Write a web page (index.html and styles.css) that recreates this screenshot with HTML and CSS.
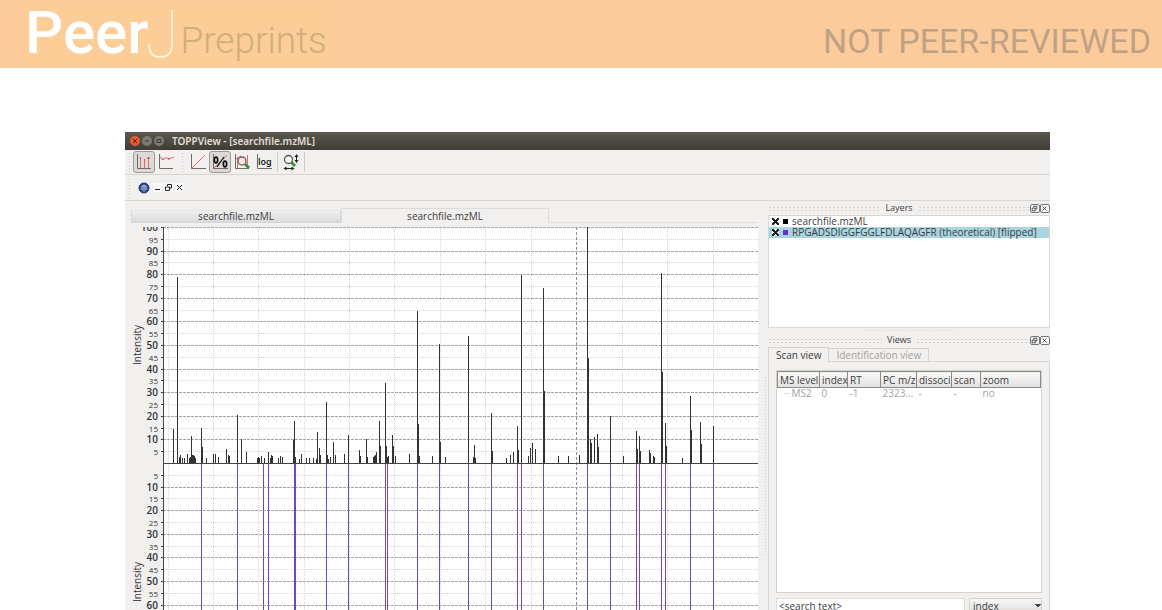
FILE: index.html
```html
<!DOCTYPE html>
<html lang="en">
<head>
    <meta charset="UTF-8">
    <meta name="viewport" content="width=device-width, initial-scale=1.0">
    <title>TOPPView - PeerJ Preprints</title>
    <link rel="stylesheet" href="styles.css">
</head>
<body>
    <header class="banner">
        <div class="logo">
            <span class="logo-peer">Peer</span>
            <svg class="logo-j" width="26" height="50" viewBox="0 0 26 50"><path d="M24 1V35Q24 48 12 48Q1 48 1 35" fill="none" stroke="#fff0da" stroke-width="2"/></svg>
            <span class="logo-preprints">Preprints</span>
        </div>
        <span class="review-state">NOT PEER-REVIEWED</span>
    </header>

    <main class="window">
        <div class="titlebar">
            <button class="wm wm-close" aria-label="Close"><svg viewBox="0 0 10 10"><path d="M3 3L7 7M7 3L3 7"/></svg></button>
            <button class="wm" aria-label="Minimize"><svg viewBox="0 0 10 10"><path d="M3 5H7"/></svg></button>
            <button class="wm" aria-label="Maximize"><svg viewBox="0 0 10 10"><path d="M3 3.5H7V6.5H3Z"/></svg></button>
            <span class="title">TOPPView - [searchfile.mzML]</span>
        </div>

        <div class="toolbar">
            <span class="handle"></span>
            <button class="tool pressed" aria-label="Peak mode">
                <svg viewBox="0 0 18 18"><path class="ax" d="M2.5 1V15.5H16"/><path class="red" d="M5.5 15V5M9.5 15V7M13.5 15V5"/><path class="red-fill" d="M5 4h1v2h-1zM9 6h1v2h-1zM12.5 4h2v2h-2z"/></svg>
            </button>
            <button class="tool" aria-label="Raw data mode">
                <svg viewBox="0 0 18 18"><path class="ax" d="M2.5 1V15.5H16"/><path class="red" d="M2.5 3L5.5 6.5L9 4.500L12 6L17 4"/><path class="red-fill" d="M5 5.500h1.500v1.500h-1.500zM11 5h1.500v1.500h-1.500z"/></svg>
            </button>
            <span class="handle inner"></span>
            <button class="tool" aria-label="Linear intensity">
                <svg viewBox="0 0 18 18"><path class="ax" d="M2.5 1V15.5H17"/><path class="red" d="M3 15L16 2"/></svg>
            </button>
            <button class="tool pressed" aria-label="Percentage intensity">
                <svg viewBox="0 0 18 18"><path class="ax" d="M2.5 1V15.5H17"/><path class="red" d="M3 15L16 2"/><path d="M6 14L13 4" stroke="#111" stroke-width="1.3"/><ellipse cx="5" cy="7" rx="1.6" ry="2.8" fill="#fff" stroke="#111" stroke-width="1.8"/><ellipse cx="14" cy="11" rx="1.6" ry="2.8" fill="#fff" stroke="#111" stroke-width="1.8"/></svg>
            </button>
            <button class="tool" aria-label="Snap to maximum">
                <svg viewBox="0 0 18 18"><path class="ax" d="M2.5 1V15.5H16"/><path class="red" d="M4.5 15V4M14.5 15V2M3 6L8 3"/><path d="M12 11L16 15" stroke="#2f9a2f" stroke-width="3"/><circle cx="9" cy="8" r="4" fill="#f6e4e4" stroke="#666" stroke-width="1.3"/></svg>
            </button>
            <button class="tool" aria-label="Logarithmic intensity">
                <svg viewBox="0 0 18 18"><path class="ax" d="M2.5 1V15.5H17"/><text x="3" y="12" class="log-text">log</text></svg>
            </button>
            <span class="rule"></span>
            <button class="tool" aria-label="Reset zoom">
                <svg viewBox="0 0 18 18"><path d="M9 9L13 13" stroke="#2f9a2f" stroke-width="3"/><circle cx="6.5" cy="6.5" r="4" fill="#f8f8f8" stroke="#555" stroke-width="1.3"/><path d="M14.5 2V9M3 15.5H11" stroke="#222"/><path d="M12.5 4L14.5 1L16.5 4ZM12.5 7L14.5 10L16.5 7ZM4.5 13.5L1.5 15.5L4.5 17.5ZM9.5 13.5L12.5 15.5L9.5 17.5Z" fill="#222"/></svg>
            </button>
            <span class="rule"></span>
        </div>

        <div class="toolbar">
            <span class="handle"></span>
            <svg class="globe" viewBox="0 0 12 12"><circle cx="6" cy="6" r="5" fill="#34508f" stroke="#1d2f66"/><path d="M4 4.5Q6 2 8 4.5M4 4V8M6 3V9.5M8 4V8" stroke="#b8c9ec" fill="none"/></svg>
            <button class="mdi" aria-label="Minimize file"><svg viewBox="0 0 9 9"><path d="M2 6.5H7"/></svg></button>
            <button class="mdi" aria-label="Restore file"><svg viewBox="0 0 9 9"><path d="M3.5 3V1.5H7.5V5H6M1.5 4H5.5V7.5H1.5Z"/></svg></button>
            <button class="mdi" aria-label="Close file"><svg viewBox="0 0 9 9"><path d="M2 2L7 7M7 2L2 7"/></svg></button>
        </div>

        <div class="workspace">
            <section class="plot-pane">
                <div class="file-tabs">
                    <button class="file-tab">searchfile.mzML</button>
                    <button class="file-tab active">searchfile.mzML</button>
                    <span class="tab-rest"></span>
                </div>
                <svg id="spectrum" class="spectrum" viewBox="0 0 633 383" preserveAspectRatio="xMinYMin slice"></svg>
            </section>

            <div class="splitter"><span class="grip"></span></div>

            <aside class="docks">
                <div class="dock-title">
                    <span class="dots"></span><h2>Layers</h2><span class="dots"></span>
                    <button class="mdi framed" aria-label="Float layers"><svg viewBox="0 0 9 9"><path d="M3.5 3V1.5H7.5V5H6M1.5 4H5.5V7.5H1.5Z"/></svg></button>
                    <button class="mdi framed" aria-label="Close layers"><svg viewBox="0 0 9 9"><path d="M2 2L7 7M7 2L2 7"/></svg></button>
                </div>
                <div class="layer-list">
                    <label class="layer"><input type="checkbox" checked><span class="swatch"></span>searchfile.mzML</label>
                    <label class="layer selected"><input type="checkbox" checked><span class="swatch purple"></span>RPGADSDIGGFGGLFDLAQAGFR (theoretical) [flipped]</label>
                </div>
                <span class="dock-grip"></span>
                <div class="dock-title">
                    <span class="dots"></span><h2>Views</h2><span class="dots"></span>
                    <button class="mdi framed" aria-label="Float views"><svg viewBox="0 0 9 9"><path d="M3.5 3V1.5H7.5V5H6M1.5 4H5.5V7.5H1.5Z"/></svg></button>
                    <button class="mdi framed" aria-label="Close views"><svg viewBox="0 0 9 9"><path d="M2 2L7 7M7 2L2 7"/></svg></button>
                </div>
                <div class="view-tabs">
                    <button class="view-tab active">Scan view</button>
                    <button class="view-tab" disabled>Identification view</button>
                </div>
                <div class="view-panel">
                    <div class="scan-box">
                        <table class="scans">
                            <thead>
                                <tr><th class="c-level">MS level</th><th class="c-index">index</th><th class="c-rt">RT</th><th class="c-pc">PC m/z</th><th class="c-diss">dissoci</th><th class="c-scan">scan</th><th>zoom</th></tr>
                            </thead>
                            <tbody>
                                <tr><td class="branch">MS2</td><td>0</td><td>-1</td><td>2323...</td><td>-</td><td>-</td><td>no</td></tr>
                            </tbody>
                        </table>
                    </div>
                    <div class="search-row">
                        <input type="text" class="search" aria-label="Search text" value="&lt;search text&gt;">
                        <select class="search-by" aria-label="Search column"><option>index</option></select>
                    </div>
                </div>
            </aside>
        </div>
    </main>

    <script src="spectrum.js"></script>
</body>
</html>
```

FILE: styles.css
```css
* {
    box-sizing: border-box;
}
body {
    margin: 0;
    height: 100vh;
    overflow: hidden;
    display: flex;
    flex-direction: column;
    background: #fff;
    color: #3c3c3c;
    font: 10px/12px "Open Sans", "Noto Sans", sans-serif;
}
button, input, select {
    font: inherit;
    color: inherit;
    margin: 0;
    padding: 0;
    border: none;
    background: none;
}
h2 {
    margin: 0;
    font: inherit;
}

/* banner */
.banner {
    flex: none;
    display: flex;
    justify-content: space-between;
    align-items: center;
    height: 68px;
    padding: 0 11px 0 24px;
    background: #fbcb9c;
    font-family: Roboto, sans-serif;
}
.logo {
    display: flex;
    align-items: baseline;
    height: 64px;
    padding: 0 8px 0 1px;
    background: #fccd96;
}
.logo-peer {
    color: #fff;
    font: 500 60px/62px Roboto, sans-serif;
}
.logo-j {
    align-self: center;
    margin-right: 6px;
}
.logo-preprints {
    color: #cfae80;
    font: 300 37px/62px Roboto, sans-serif;
}
.review-state {
    padding-top: 14px;
    color: #bfa284;
    font-size: 34px;
    line-height: 40px;
}

/* application window */
.window {
    flex: 1;
    min-height: 0;
    margin: 64px 112px 0 125px;
    display: flex;
    flex-direction: column;
    background: #f2f0ee;
}
.titlebar {
    flex: none;
    display: flex;
    align-items: center;
    gap: 2px;
    height: 18px;
    padding-left: 5px;
    background: linear-gradient(#5a574e, #3f3c37);
}
.wm {
    display: flex;
    width: 10px;
    height: 10px;
    border-radius: 50%;
    background: #7d7a72;
    stroke: #3c3a35;
    fill: none;
}
.wm-close {
    background: #e8592b;
    stroke: #5a1d08;
}
.title {
    margin-left: 6px;
    color: #e2ded5;
    font-family: "Noto Sans", sans-serif;
    font-weight: 600;
}
.toolbar {
    flex: none;
    display: flex;
    align-items: center;
    height: 25px;
    padding-left: 3px;
    border-bottom: 1px solid #d8d5d2;
}
.toolbar + .toolbar {
    height: 26px;
}
.handle {
    width: 4px;
    height: 20px;
    margin-right: 1px;
    background: radial-gradient(circle, #cfccc9 1px, transparent 1px) 0 0 / 3px 3px;
}
.handle.inner {
    margin: 0 2px 0 4px;
}
.tool {
    display: flex;
    align-items: center;
    justify-content: center;
    width: 22px;
    height: 22px;
    border: 1px solid transparent;
    border-radius: 3px;
}
.tool.pressed {
    border-color: #9c9996;
    background: #dcdad8;
}
.tool svg {
    width: 18px;
    height: 18px;
    fill: none;
}
.tool .ax {
    stroke: #6c6c6c;
    stroke-width: 1;
}
.tool .red {
    stroke: #e56a6a;
}
.tool .red-fill {
    fill: #d94848;
}
.tool .log-text {
    fill: #222;
    font: 600 9px "Noto Sans", sans-serif;
}
.rule {
    width: 1px;
    height: 20px;
    margin: 0 2px;
    background: #cfccc9;
}
.globe {
    width: 12px;
    height: 12px;
    margin: 0 3px 0 5px;
}
.mdi {
    display: flex;
    width: 9px;
    height: 9px;
    margin-right: 2px;
    background: #fbfafa;
    stroke: #222;
    fill: none;
}
.mdi.framed {
    width: 10px;
    height: 9px;
    margin: 0;
    border: 1px solid #777;
    border-radius: 2px;
}

/* work area */
.workspace {
    flex: 1;
    min-height: 0;
    display: grid;
    grid-template-columns: minmax(0, 1fr) 10px 282px;
}
.plot-pane {
    display: flex;
    flex-direction: column;
    min-height: 0;
}
.file-tabs {
    flex: none;
    display: flex;
    align-items: flex-end;
    height: 26px;
    padding: 0 0 4px 6px;
}
.file-tab {
    flex: 0 1 210px;
    height: 13px;
    border: 1px solid #d8d6d4;
    border-top-color: #e8e6e4;
    background: linear-gradient(#f0f0f0, #dadada);
    line-height: 11px;
}
.file-tab.active {
    flex-basis: 208px;
    height: 15px;
    border-color: #dedcda;
    border-bottom: none;
    background: #f2f0ee;
    line-height: 13px;
}
.tab-rest {
    flex: 1;
    border-bottom: 1px solid #e2dfdc;
}
.spectrum {
    flex: 1;
    min-height: 0;
    width: 100%;
}
.splitter {
    display: flex;
    align-items: center;
    justify-content: flex-end;
    padding: 120px 1px 0 0;
}
.grip {
    width: 3px;
    height: 180px;
    background: radial-gradient(circle, #cbc8c5 1px, transparent 1px) 0 0 / 3px 3px;
}

/* docks */
.docks {
    display: flex;
    flex-direction: column;
    min-height: 0;
}
.dock-title {
    flex: none;
    display: flex;
    align-items: center;
    height: 14px;
}
.dock-title h2 {
    padding: 0 5px;
    font-size: 9px;
}
.dots {
    flex: 1;
    height: 5px;
    background: radial-gradient(circle, #d4d1ce 1px, transparent 1px) 0 0 / 4px 3px;
}
.layer-list {
    flex: none;
    height: 113px;
    border: 1px solid #dad7d4;
    background: #fff;
}
.layer {
    display: flex;
    align-items: center;
    height: 11px;
    padding-left: 3px;
    line-height: 11px;
    white-space: nowrap;
}
.layer.selected {
    background: #a9d5e0;
}
.layer input {
    appearance: none;
    width: 7px;
    height: 7px;
    background:
        linear-gradient(45deg, transparent 40%, #222 40%, #222 60%, transparent 60%),
        linear-gradient(-45deg, #e9eef0 40%, #222 40%, #222 60%, #e9eef0 60%);
}
.swatch {
    width: 5px;
    height: 5px;
    margin: 0 4px;
    background: #000;
}
.swatch.purple {
    background: #6a2fd0;
}
.dock-grip {
    flex: none;
    width: 92px;
    height: 3px;
    margin: 1px auto;
    background: radial-gradient(circle, #d4d1ce 1px, transparent 1px) 0 0 / 3px 3px;
}
.view-tabs {
    flex: none;
    display: flex;
    align-items: flex-end;
    height: 15px;
    margin-bottom: -1px;
}
.view-tab {
    height: 14px;
    padding: 0 7px;
    border: 1px solid #d4d1ce;
    border-left: none;
    color: #a5a29f;
    line-height: 12px;
}
.view-tab.active {
    height: 15px;
    border-left: 1px solid #d4d1ce;
    border-bottom: none;
    background: #f2f0ee;
    color: #3c3c3c;
    position: relative;
}
.view-panel {
    flex: 1;
    min-height: 0;
    padding: 8px 7px 0;
    border: 1px solid #d8d5d2;
    border-bottom: none;
}
.scan-box {
    height: 223px;
    border: 1px solid #d4d1ce;
    background: #fff;
}
.scans {
    width: 100%;
    table-layout: fixed;
    border-collapse: collapse;
}
.scans th {
    height: 16px;
    padding: 0 0 0 2px;
    border: 1px solid #8c8986;
    background: linear-gradient(#fafafa, #e2e0de);
    font-weight: normal;
    text-align: left;
    white-space: nowrap;
    overflow: hidden;
}
.scans td {
    height: 11px;
    padding: 0 0 0 2px;
    color: #a5a29f;
    line-height: 11px;
}
.scans .branch {
    padding-left: 14px;
    background: linear-gradient(#ddd, #ddd) 6px 5px / 6px 1px no-repeat;
}
.c-level { width: 42px; }
.c-index { width: 28px; }
.c-rt { width: 33px; }
.c-pc { width: 36px; }
.c-diss { width: 35px; }
.c-scan { width: 29px; }
.search-row {
    display: flex;
    gap: 4px;
    margin-top: 5px;
}
.search {
    flex: 1;
    min-width: 0;
    height: 15px;
    padding: 0 2px;
    border: 1px solid #dedbd8;
    background: #fff;
}
.search-by {
    appearance: none;
    width: 73px;
    height: 15px;
    padding: 0 3px;
    border: 1px solid #d4d1ce;
    background:
        linear-gradient(to bottom left, #444 50%, transparent 50%) 65px 5px / 3px 3px no-repeat,
        linear-gradient(to bottom right, #444 50%, transparent 50%) 68px 5px / 3px 3px no-repeat,
        linear-gradient(#f8f8f8, #e0dedc);
}

/* spectrum drawing */
.plot-bg { fill: #fff; }
.grid-major, .grid-minor, .grid-mark, .axis, .peak, .theory {
    fill: none;
    shape-rendering: crispEdges;
}
.grid-major { stroke: #a4a4a4; stroke-dasharray: 3 1; }
.grid-minor { stroke: #d6d6d6; stroke-dasharray: 1 1; }
.grid-mark { stroke: #8c8c8c; stroke-dasharray: 3 2; }
.axis { stroke: #444; }
.peak { stroke: #333; }
.theory { stroke: #6c46c8; }
.label-major, .label-minor, .axis-name {
    fill: #333;
    text-anchor: end;
    font-size: 10px;
}
.label-major { font-weight: 600; }
.label-minor { font-size: 8px; }
.axis-name { text-anchor: middle; }
```

FILE: spectrum.js
```js
const svg = document.getElementById('spectrum');
const left = 38, right = 633, bottom = 383, zero = 236, perUnit = 2.36;

// [position, relative intensity in %]
const peaks = [
    [48, 14.4], [52, 79], [54, 2.5], [55, 3.2], [57, 2], [59, 2.3], [62, 3.8], [64, 2.1], [65, 2.5],
    [66, 11.6], [67, 3.5], [68, 3.2], [69, 3], [70, 2.1], [76, 15], [77, 6.8], [81, 2.3], [88, 3.7],
    [90, 4], [93, 2.7], [101, 6], [103, 3.4], [104, 3], [112, 20.5], [116, 10.2], [121, 4.7],
    [132, 2.1], [133, 2.5], [134, 2.1], [136, 3.1], [139, 2.3], [143, 4.8], [145, 2.1], [146, 3.3],
    [147, 3.1], [153, 2.1], [155, 2.8], [157, 2.4], [168, 9.8], [169, 18], [170, 2.5], [174, 1.7],
    [176, 3.8], [181, 2], [184, 2.3], [188, 2.1], [191, 1.7], [192, 13], [194, 6.5], [195, 3.5],
    [201, 25.7], [202, 3.2], [203, 1.7], [205, 2.5], [208, 8.9], [210, 3.5], [219, 3.7], [223, 12],
    [234, 5.6], [235, 2.8], [241, 10.3], [242, 2.7], [248, 2.4], [249, 3], [250, 3.4], [251, 4.7],
    [254, 17.8], [255, 7], [260, 33.9], [261, 7], [262, 2.4], [263, 3.1], [267, 12], [268, 7.3],
    [270, 2.8], [284, 3.8], [292, 64.4], [293, 16.5], [294, 3], [307, 2.8], [314, 50.4], [315, 8.8],
    [320, 2.4], [343, 54], [348, 2.4], [349, 7.8], [350, 2.3], [366, 21.2], [367, 4.9], [381, 2.1],
    [385, 3.4], [388, 4.5], [392, 15.7], [393, 5.6], [396, 79.5], [403, 3.1], [405, 6.4], [407, 8.6],
    [410, 5.8], [418, 74.2], [419, 30.6], [433, 2.8], [443, 3.1], [454, 3.5], [462, 100], [463, 44.6],
    [465, 10.2], [466, 8.5], [469, 11], [472, 12.3], [473, 6.6], [485, 20], [498, 2.8], [511, 13.4],
    [512, 5.9], [514, 11.3], [515, 4.9], [524, 5.5], [525, 4.2], [528, 2.8], [529, 2.7], [536, 80.5],
    [537, 38.4], [540, 17], [541, 7.3], [557, 2.3], [565, 28.5], [566, 14.1], [575, 17.5], [576, 8.2],
    [588, 15.8]
];
const theoretical = [76, 112, 138, 143, 169, 170, 201, 223, 260, 262, 292, 314, 343, 366,
    392, 396, 418, 462, 485, 511, 514, 536, 540, 565, 588];
const gridX = [43, 88, 133, 179, 224, 269, 315, 360, 406, 497, 542, 588];
const markX = 451;

function add(name, attrs, text) {
    const el = document.createElementNS('http://www.w3.org/2000/svg', name);
    for (const key in attrs) el.setAttribute(key, attrs[key]);
    if (text) el.textContent = text;
    svg.appendChild(el);
}

function line(cls, x1, y1, x2, y2) {
    add('path', { class: cls, d: `M${x1} ${y1}L${x2} ${y2}` });
}

add('rect', { class: 'plot-bg', x: left, y: 0, width: right - left, height: bottom });

gridX.forEach(x => line('grid-minor', x + 0.5, 0, x + 0.5, bottom));
line('grid-mark', markX + 0.5, 0, markX + 0.5, bottom);

for (let v = 5; v <= 100; v += 5) {
    const kind = v % 10 === 0 ? 'major' : 'minor';
    [-1, 1].forEach(side => {
        const y = Math.round(zero + side * v * perUnit) + 0.5;
        if (y > bottom) return;
        line('grid-' + kind, left, y, right, y);
        line('axis', left - 2, y, left, y);
        add('text', { class: 'label-' + kind, x: left - 5, y: y + 3 }, String(v));
    });
}

theoretical.forEach(x => line('theory', x + 0.5, zero, x + 0.5, bottom));
peaks.forEach(([x, v]) => line('peak', x + 0.5, zero, x + 0.5, Math.round(zero - v * perUnit)));

line('axis', left + 0.5, 0, left + 0.5, bottom);
line('axis', left, zero + 0.5, right, zero + 0.5);
[118, 355].forEach(y => add('text', { class: 'axis-name', transform: `translate(16 ${y}) rotate(-90)` }, 'Intensity'));
```
